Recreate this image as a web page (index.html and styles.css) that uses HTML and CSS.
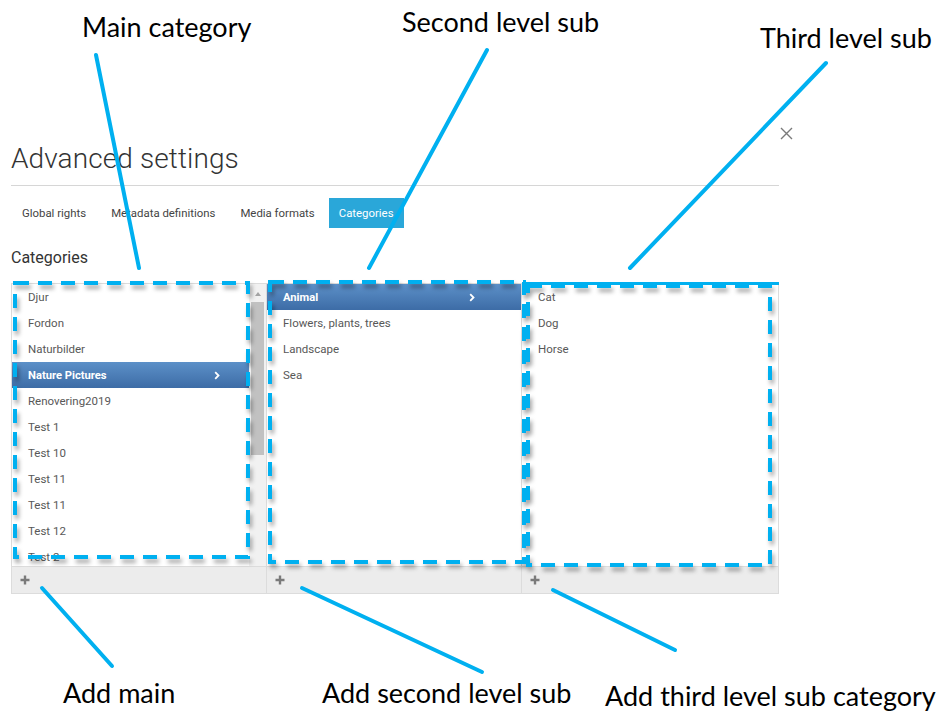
FILE: index.html
```html
<!DOCTYPE html>
<html lang="en">
<head>
<meta charset="utf-8">
<title>Advanced settings</title>
<link rel="stylesheet" href="styles.css">
</head>
<body>
<div class="page">
  <div class="dialog">
    <div class="dialog-top">
      <button class="close" aria-label="Close">
        <svg width="13" height="13" viewBox="0 0 13 13"><path d="M1 1L12 12M12 1L1 12" stroke="#7a7a7a" stroke-width="1.4" fill="none"/></svg>
      </button>
    </div>
    <h1 class="title">Advanced settings</h1>
    <div class="rule"></div>
    <nav class="tabs">
      <span class="tab">Global rights</span>
      <span class="tab">Metadata definitions</span>
      <span class="tab">Media formats</span>
      <span class="tab active">Categories</span>
    </nav>
    <h2 class="section">Categories</h2>
    <div class="columns">
      <div class="col">
        <div class="col-body">
          <ul class="list">
            <li class="item">Djur</li>
            <li class="item">Fordon</li>
            <li class="item">Naturbilder</li>
            <li class="item selected"><span class="name">Nature Pictures</span><svg class="chev" width="6" height="9" viewBox="0 0 6 9"><path d="M1.2 1.2L4.5 4.5L1.2 7.8" stroke="#fff" stroke-width="1.8" fill="none"/></svg></li>
            <li class="item">Renovering2019</li>
            <li class="item">Test 1</li>
            <li class="item">Test 10</li>
            <li class="item">Test 11</li>
            <li class="item">Test 11</li>
            <li class="item">Test 12</li>
            <li class="item">Test 2</li>
          </ul>
          <div class="scrollbar"><span class="arrow"></span><span class="thumb"></span></div>
        </div>
        <div class="col-foot"><svg class="plus" width="10" height="10" viewBox="0 0 10 10"><path d="M5 0.5V9.5M0.5 5H9.5" stroke="#7a7a7a" stroke-width="2.4" fill="none"/></svg></div>
      </div>
      <div class="col">
        <div class="col-body">
          <ul class="list">
            <li class="item selected"><span class="name">Animal</span><svg class="chev" width="6" height="9" viewBox="0 0 6 9"><path d="M1.2 1.2L4.5 4.5L1.2 7.8" stroke="#fff" stroke-width="1.8" fill="none"/></svg></li>
            <li class="item">Flowers, plants, trees</li>
            <li class="item">Landscape</li>
            <li class="item">Sea</li>
          </ul>
        </div>
        <div class="col-foot"><svg class="plus" width="10" height="10" viewBox="0 0 10 10"><path d="M5 0.5V9.5M0.5 5H9.5" stroke="#7a7a7a" stroke-width="2.4" fill="none"/></svg></div>
      </div>
      <div class="col">
        <div class="col-body">
          <ul class="list">
            <li class="item">Cat</li>
            <li class="item">Dog</li>
            <li class="item">Horse</li>
          </ul>
        </div>
        <div class="col-foot"><svg class="plus" width="10" height="10" viewBox="0 0 10 10"><path d="M5 0.5V9.5M0.5 5H9.5" stroke="#7a7a7a" stroke-width="2.4" fill="none"/></svg></div>
      </div>
    </div>
  </div>

  <svg class="annotations" width="945" height="713" viewBox="0 0 945 713">
    <defs>
      <filter id="sh" x="-10%" y="-10%" width="120%" height="120%">
        <feDropShadow dx="2" dy="4" stdDeviation="2" flood-color="#000" flood-opacity="0.35"/>
      </filter>
    </defs>
    <g fill="none" stroke="#00b0f0" stroke-width="4" stroke-dasharray="14 9" filter="url(#sh)">
      <rect x="15" y="283" width="233" height="274"/>
      <rect x="270" y="282" width="254" height="280"/>
      <rect x="528" y="286" width="242" height="279"/>
    </g>
    <line x1="524" y1="283.5" x2="779" y2="283.5" stroke="#00b0f0" stroke-width="3"/>
    <g stroke="#00b0f0" stroke-width="4" stroke-linecap="round">
      <line x1="96" y1="55" x2="139" y2="268"/>
      <line x1="487" y1="50" x2="369" y2="268"/>
      <line x1="826" y1="63" x2="630" y2="268"/>
      <line x1="42" y1="588" x2="112" y2="666"/>
      <line x1="302" y1="588" x2="482" y2="672"/>
      <line x1="553" y1="590" x2="675" y2="650"/>
    </g>
  </svg>
  <div class="note n-main">Main category</div>
  <div class="note n-second">Second level sub</div>
  <div class="note n-third">Third level sub</div>
  <div class="note n-add-main">Add main</div>
  <div class="note n-add-second">Add second level sub</div>
  <div class="note n-add-third">Add third level sub category</div>
</div>
</body>
</html>
```

FILE: styles.css
```css
* { box-sizing: border-box; }
html, body { margin: 0; padding: 0; background: #fff; }
body {
  width: 945px;
  height: 713px;
  overflow: hidden;
  font-family: Roboto, "Liberation Sans", Arial, sans-serif;
  color: #444;
}
.page { position: relative; width: 945px; height: 713px; }

.dialog {
  width: 768px;
  margin: 0 0 0 11px;
  padding-top: 127px;
}
.dialog-top { display: flex; justify-content: flex-end; height: 13px; }
.close {
  border: 0; background: none; padding: 0; margin: 0 -14px 0 0;
  width: 13px; height: 13px; display: block; cursor: pointer;
}
.close svg { display: block; }

.title {
  margin: 3px 0 0 0;
  font-size: 28px;
  line-height: 32px;
  font-weight: 300;
  color: #333;
  letter-spacing: 0.1px;
}
.rule { height: 1px; background: #d6d6d6; margin-top: 10px; }

.tabs { display: flex; gap: 3px; margin-top: 12px; height: 30px; }
.tab {
  display: block;
  padding: 0 11px;
  font-size: 11.4px;
  line-height: 30px;
  color: #444;
}
.tab.active { background: #2aa7d9; color: #fff; padding: 0 10px; }

.section {
  margin: 20px 0 0 0;
  font-size: 16px;
  line-height: 20px;
  font-weight: 400;
  color: #333;
}

.columns {
  margin-top: 15px;
  display: grid;
  grid-template-columns: 255px 255px 1fr;
  border: 1px solid #dcdcdc;
}
.col { display: flex; flex-direction: column; border-right: 1px solid #dcdcdc; }
.col:last-child { border-right: 0; }
.col-body { display: flex; height: 282px; overflow: hidden; }
.list { list-style: none; margin: 0; padding: 0; flex: 1; min-width: 0; }
.item {
  display: flex;
  align-items: center;
  height: 26px;
  padding-left: 16px;
  font-size: 11.5px;
  color: #585858;
  white-space: nowrap;
}
.item.selected {
  background: linear-gradient(#5c90c8, #3d6ca6);
  color: #fff;
  font-weight: 700;
  font-size: 11.2px;
}
.item .name { flex: 0 0 186px; }
.chev { display: block; }

.scrollbar {
  flex: 0 0 17px;
  background: #f1f1f1;
  display: flex;
  flex-direction: column;
  align-items: center;
}
.arrow {
  margin-top: 8px;
  width: 0; height: 0;
  border-left: 3.5px solid transparent;
  border-right: 3.5px solid transparent;
  border-bottom: 4px solid #a3a3a3;
}
.thumb {
  margin-top: 6px;
  width: 13px;
  height: 153px;
  background: #c1c1c1;
}

.col-foot {
  height: 27px;
  border-top: 1px solid #dcdcdc;
  background: #ececec;
  display: flex;
  align-items: center;
  padding-left: 8px;
}
.plus { display: block; }

.annotations { position: absolute; left: 0; top: 0; pointer-events: none; }
.note {
  position: absolute;
  font-family: Lato, "Open Sans", sans-serif;
  font-size: 27px;
  line-height: 27px;
  color: #000;
  white-space: nowrap;
}
.n-main { left: 82px; top: 13px; }
.n-second { left: 402px; top: 8px; }
.n-third { left: 760px; top: 24px; }
.n-add-main { left: 63px; top: 679px; }
.n-add-second { left: 322px; top: 679px; }
.n-add-third { left: 605px; top: 682px; }
```
